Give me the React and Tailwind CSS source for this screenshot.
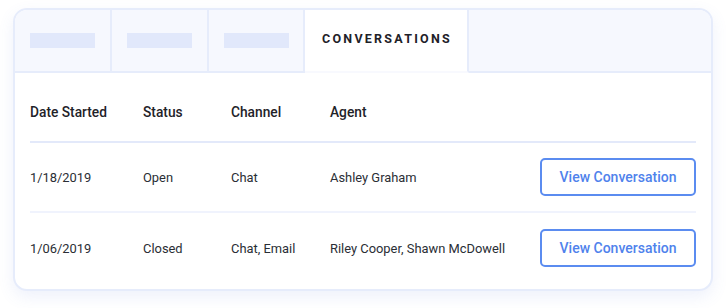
export default function App() {
  const rows = [
    { date: '1/18/2019', status: 'Open', channel: 'Chat', agent: 'Ashley Graham' },
    { date: '1/06/2019', status: 'Closed', channel: 'Chat, Email', agent: 'Riley Cooper, Shawn McDowell' },
  ]

  return (
    <div className="w-[726px] h-[308px] bg-white pt-[8px] pl-[13px] font-['Roboto',sans-serif]">
      <div className="w-[700px] h-[283px] bg-white border-2 border-[#e6ecfb] rounded-[14px] overflow-hidden shadow-[0_6px_16px_rgba(90,120,220,0.10)]">
        {/* tabs */}
        <div className="flex h-[63px]">
          <div className="w-[97px] flex items-center justify-center bg-[#f6f8fe] border-r-2 border-b-2 border-[#e6ecfb]">
            <div className="w-[65px] h-[15px] bg-[#e1e8fb]" />
          </div>
          <div className="w-[97px] flex items-center justify-center bg-[#f6f8fe] border-r-2 border-b-2 border-[#e6ecfb]">
            <div className="w-[65px] h-[15px] bg-[#e1e8fb]" />
          </div>
          <div className="w-[96px] flex items-center justify-center bg-[#f6f8fe] border-r-2 border-b-2 border-[#e6ecfb]">
            <div className="w-[65px] h-[15px] bg-[#e1e8fb]" />
          </div>
          <div className="w-[164px] flex items-center justify-center bg-white border-r-2 border-[#e6ecfb] border-b-2 border-b-[#f8f9fe]">
            <span className="text-[12.5px] font-bold tracking-[0.18em] text-[#1e2128] pb-[2px] pl-[2px]">CONVERSATIONS</span>
          </div>
          <div className="flex-1 bg-[#f6f8fe] border-b-2 border-[#e6ecfb]" />
        </div>

        {/* table */}
        <div className="px-[15px]">
          <div className="flex items-center h-[70px] pt-[10px] border-b-2 border-[#e3e9fa] text-[13.75px] font-medium text-[#1f2329]">
            <div className="w-[113px]">Date Started</div>
            <div className="w-[88px]">Status</div>
            <div className="w-[99px]">Channel</div>
            <div className="flex-1">Agent</div>
          </div>
          {rows.map((r, i) => (
            <div
              key={i}
              className={`flex items-center h-[70px] text-[12.9px] text-[#2a2e35] ${i === 0 ? 'border-b-2 border-[#f0f3fd]' : ''}`}
            >
              <div className="w-[113px] pt-[2px]">{r.date}</div>
              <div className="w-[88px] pt-[2px]">{r.status}</div>
              <div className="w-[99px] pt-[2px]">{r.channel}</div>
              <div className="flex-1 pt-[2px]">{r.agent}</div>
              <button className="w-[156px] h-[38px] border-2 border-[#5b8cf0] rounded-[5px] text-[14px] font-medium text-[#4f82ec] bg-white">
                View Conversation
              </button>
            </div>
          ))}
        </div>
      </div>
    </div>
  )
}
